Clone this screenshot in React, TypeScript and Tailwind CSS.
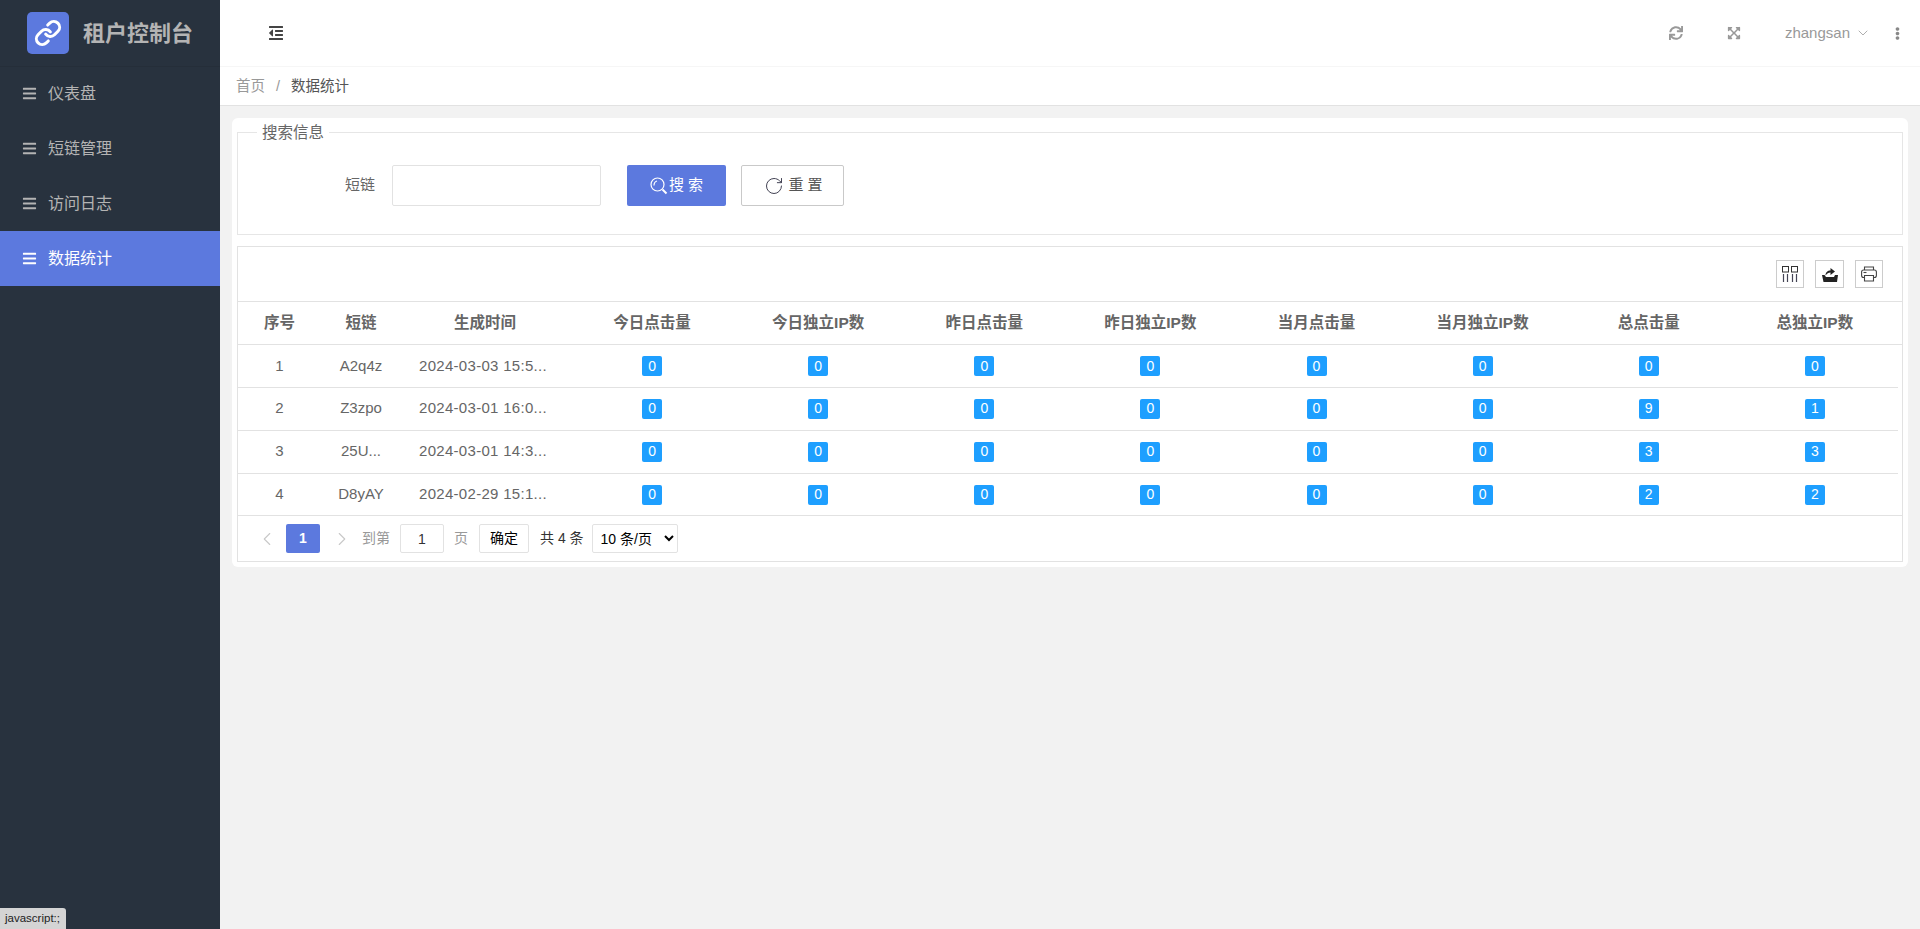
import React from 'react';
import { Link, ChevronDown, ChevronLeft, ChevronRight, RotateCw } from 'lucide-react';
import { FaBars, FaOutdent, FaSync, FaExpandArrowsAlt, FaEllipsisV } from 'react-icons/fa';

const menus = ['仪表盘', '短链管理', '访问日志', '数据统计'];
const headers = ['序号', '短链', '生成时间', '今日点击量', '今日独立IP数', '昨日点击量', '昨日独立IP数', '当月点击量', '当月独立IP数', '总点击量', '总独立IP数'];
const rows = [
  { id: 1, code: 'A2q4z', time: '2024-03-03 15:5...', stats: [0, 0, 0, 0, 0, 0, 0, 0] },
  { id: 2, code: 'Z3zpo', time: '2024-03-01 16:0...', stats: [0, 0, 0, 0, 0, 0, 9, 1] },
  { id: 3, code: '25U...', time: '2024-03-01 14:3...', stats: [0, 0, 0, 0, 0, 0, 3, 3] },
  { id: 4, code: 'D8yAY', time: '2024-02-29 15:1...', stats: [0, 0, 0, 0, 0, 0, 2, 2] },
];

function Cols() {
  return (
    <colgroup>
      <col className="w-[83px]" />
      <col className="w-[80px]" />
      <col className="w-[168px]" />
      {[0, 1, 2, 3, 4, 5, 6, 7].map((i) => (
        <col key={i} className="w-[166.1px]" />
      ))}
    </colgroup>
  );
}

function SearchIcon() {
  return (
    <svg width="18" height="18" viewBox="0 0 18 18" fill="none" stroke="#fff" strokeWidth="1.2">
      <circle cx="7.5" cy="7.5" r="6.5" />
      <path d="M4 8.5c0-2.5 1-4 3-4.5" />
      <path d="M12.5 12.5l4 4" strokeWidth="2" />
    </svg>
  );
}

function ColsIcon() {
  return (
    <svg width="16" height="16" viewBox="0 0 16 16" fill="none" stroke="#333" strokeWidth="1">
      <rect x="0.5" y="0.5" width="6" height="5.5" />
      <rect x="9.5" y="0.5" width="6" height="5.5" />
      <path d="M1.5 8v8M5.5 8v8M10.5 8v8M14.5 8v8" stroke="#445" strokeWidth="1.2" />
    </svg>
  );
}

function ExportIcon() {
  return (
    <svg width="16" height="16" viewBox="0 0 16 16" fill="#222">
      <path d="M0 9h2.5l1.5 2h8l1-2H16l-1 7H1.5z" />
      <path d="M3.5 9.5c0-3 2-5 5-5V2L13 5.5 8.500 9V6.500c-2 0-3.500 1-5 3z" />
    </svg>
  );
}

function PrintIcon() {
  return (
    <svg width="16" height="16" viewBox="0 0 16 16" fill="none" stroke="#444" strokeWidth="1.1">
      <path d="M3.500 4V1h9v3" />
      <rect x="0.600" y="4" width="14.800" height="7.500" rx="2" />
      <path d="M3.500 9.500h9V15h-9z" fill="#fff" />
      <path d="M2.500 6.500h3" />
    </svg>
  );
}

export default function App() {
  return (
    <div className="relative flex h-screen overflow-hidden bg-[#f2f2f2] font-['Liberation_Sans','Noto_Sans_CJK_SC',sans-serif] text-[#666]">
      <aside className="w-[220px] shrink-0 bg-[#28323e]">
        <div className="flex h-[66px] items-center pl-[27px] shadow-[0_1px_0_#252e39]">
          <div className="flex h-[42px] w-[42px] items-center justify-center rounded-[5px] bg-[#5c79de]">
            <Link size={28} color="#fff" strokeWidth={2.6} />
          </div>
          <span className="ml-[14px] text-[22px] font-bold text-[#b4b4b4]">租户控制台</span>
        </div>
        <nav>
          {menus.map((m, i) => (
            <div
              key={m}
              className={
                i === 3
                  ? 'flex h-[55px] items-center gap-[11px] bg-[#5c79de] pl-[22px] text-[16px] text-white'
                  : 'flex h-[55px] items-center gap-[11px] pl-[22px] text-[16px] text-[#b4b4b4]'
              }
            >
              <FaBars size={15} />
              <span>{m}</span>
            </div>
          ))}
        </nav>
      </aside>

      <div className="flex min-w-0 flex-1 flex-col">
        <header className="flex h-[67px] shrink-0 items-center border-b border-[#f6f6f6] bg-white pl-[48px] pr-[16px]">
          <FaOutdent size={16} color="#444" />
          <div className="ml-auto flex items-center text-[#999]">
            <FaSync size={14} />
            <FaExpandArrowsAlt size={14} className="ml-[44px]" />
            <span className="ml-[44px] text-[15px]">zhangsan</span>
            <ChevronDown size={16} strokeWidth={1.2} className="ml-[5px]" />
            <FaEllipsisV size={13} className="ml-[20px] text-[#888]" />
          </div>
        </header>

        <div className="flex h-[39px] shrink-0 items-center border-b border-[#e2e2e2] bg-white pl-[16px] pt-[2px] text-[14.500px]">
          <span className="text-[#999]">首页</span>
          <span className="mx-[11px] text-[#999]">/</span>
          <span className="text-[#555]">数据统计</span>
        </div>

        <main className="px-[12px] pt-[12px]">
          <div className="rounded-[6px] bg-white px-[5px] pb-[5px] pt-[3px]">
            <fieldset className="border border-[#e6e6e6]">
              <legend className="ml-[19px] px-[5px] pt-[2px] text-[15.500px] leading-[20px]">搜索信息</legend>
              <div className="flex items-center pb-[28px] pl-[107px] pt-[22px]">
                <label className="text-[15px]">短链</label>
                <input className="ml-[17px] h-[41px] w-[209px] rounded-[2px] border border-[#e2e2e2] bg-white" />
                <button className="ml-[26px] flex h-[41px] w-[99px] items-center justify-center rounded-[2px] bg-[#5c79de] pl-[4px] text-[15px] text-white">
                  <SearchIcon />
                  <span className="ml-[1px] tracking-[4px]">搜索</span>
                </button>
                <button className="ml-[15px] flex h-[41px] w-[103px] items-center justify-center gap-[5px] rounded-[2px] border border-[#c9c9c9] bg-white pl-[5px] text-[15px] text-[#555]">
                  <RotateCw size={20} strokeWidth={1.2} className="text-[#445]" />
                  <span className="tracking-[4px]">重置</span>
                </button>
              </div>
            </fieldset>

            <div className="mt-[11px] border border-[#e2e2e2]">
              <div className="flex h-[55px] items-center justify-end gap-[11px] border-b border-[#e2e2e2] pr-[19px]">
                <div className="flex h-[28px] w-[28px] items-center justify-center border border-[#ccc]"><ColsIcon /></div>
                <div className="flex h-[28px] w-[29px] items-center justify-center border border-[#ccc]"><ExportIcon /></div>
                <div className="flex h-[28px] w-[28px] items-center justify-center border border-[#ccc]"><PrintIcon /></div>
              </div>
              <div className="border-b border-[#e2e2e2]">
                <table className="w-[1660px] table-fixed">
                  <Cols />
                  <thead>
                    <tr className="h-[42px] text-[15.500px] font-bold">
                      {headers.map((h) => (
                        <th key={h} className="text-center font-bold">{h}</th>
                      ))}
                    </tr>
                  </thead>
                </table>
              </div>
              <table className="w-[1660px] table-fixed border-collapse">
                <Cols />
                <tbody>
                  {rows.map((r) => (
                    <tr key={r.id} className="h-[43px] border-b border-[#e2e2e2] text-center text-[15px] first:h-[42px] last:h-[42px] last:border-b-0">
                      <td>{r.id}</td>
                      <td>{r.code}</td>
                      <td className="pl-[18px] text-left tracking-[0.3px]">{r.time}</td>
                      {r.stats.map((s, i) => (
                        <td key={i}>
                          <span className="inline-flex h-[20px] w-[20px] items-center justify-center rounded-[2px] bg-[#1e9fff] text-[14px] text-white">{s}</span>
                        </td>
                      ))}
                    </tr>
                  ))}
                </tbody>
              </table>
              <div className="flex h-[46px] items-center border-t border-[#e2e2e2] pl-[18px] text-[14px]">
                <ChevronLeft size={22} strokeWidth={1.2} className="text-[#c8c8c8]" />
                <button className="ml-[8px] h-[29px] w-[34px] rounded-[2px] bg-[#5c79de] font-bold text-white">1</button>
                <ChevronRight size={22} strokeWidth={1.2} className="ml-[11px] text-[#c8c8c8]" />
                <span className="ml-[9px] text-[#999]">到第</span>
                <input defaultValue="1" className="ml-[10px] h-[29px] w-[44px] rounded-[2px] border border-[#e2e2e2] text-center text-[#333]" />
                <span className="ml-[10px] text-[#999]">页</span>
                <button className="ml-[11px] h-[29px] w-[50px] rounded-[2px] border border-[#e2e2e2] bg-white text-black">确定</button>
                <span className="ml-[11px] text-[#333]">共 4 条</span>
                <select defaultValue="10" className="ml-[8px] h-[29px] w-[86px] rounded-[2px] border border-[#e2e2e2] bg-white pl-[4px] text-black">
                  <option value="10">10 条/页</option>
                  <option value="20">20 条/页</option>
                </select>
              </div>
            </div>
          </div>
        </main>
      </div>

      <div className="absolute bottom-0 left-0 flex h-[21px] w-[66px] items-center rounded-tr-[3px] bg-[#d4d4d4] pl-[5px] text-[11.500px] text-[#222]">
        javascript:;
      </div>
    </div>
  );
}
